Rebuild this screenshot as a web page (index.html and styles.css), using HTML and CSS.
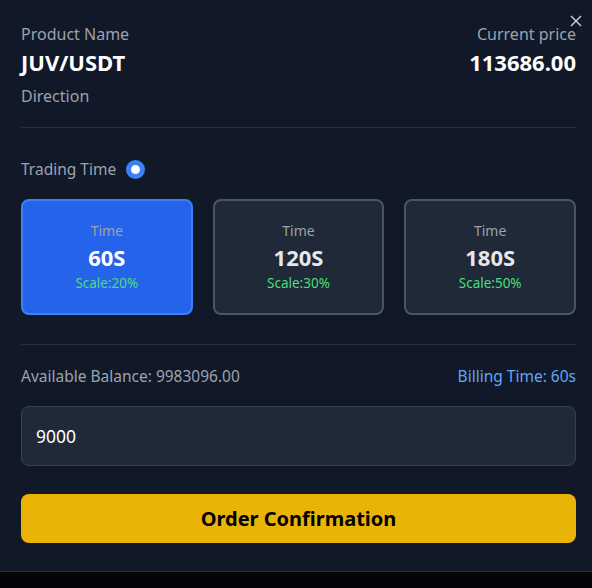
FILE: index.html
```html
<!DOCTYPE html>
<html>
<head>
<meta charset="utf-8">
<link rel="stylesheet" href="styles.css">
</head>
<body>
<div class="panel">
  <button class="close" aria-label="close">
    <svg width="12" height="12" viewBox="0 0 12 12"><path d="M1 1L11 11M11 1L1 11" stroke="#d1d5db" stroke-width="1.4" fill="none"/></svg>
  </button>
  <div class="head">
    <div class="col">
      <div class="label hl">Product Name</div>
      <div class="big">JUV/USDT</div>
      <div class="label hl dir">Direction</div>
    </div>
    <div class="col right">
      <div class="label hl">Current price</div>
      <div class="big">113686.00</div>
    </div>
  </div>
  <hr class="divider">
  <div class="tt">
    <span class="label">Trading Time</span>
    <span class="radio"></span>
  </div>
  <div class="cards">
    <div class="card active">
      <div class="ct">Time</div>
      <div class="cv">60S</div>
      <div class="cs">Scale:20%</div>
    </div>
    <div class="card">
      <div class="ct">Time</div>
      <div class="cv">120S</div>
      <div class="cs">Scale:30%</div>
    </div>
    <div class="card">
      <div class="ct">Time</div>
      <div class="cv">180S</div>
      <div class="cs">Scale:50%</div>
    </div>
  </div>
  <hr class="divider d2">
  <div class="bal">
    <span class="label">Available Balance: 9983096.00</span>
    <span class="billing">Billing Time: 60s</span>
  </div>
  <div class="input">9000</div>
  <button class="confirm">Order Confirmation</button>
</div>
<div class="footer"></div>
</body>
</html>
```
FILE: styles.css
```css
* { box-sizing: border-box; }
html, body { margin: 0; padding: 0; }
body {
  background: #030508;
  font-family: "Noto Sans", "Open Sans", sans-serif;
  width: 592px;
  height: 588px;
  overflow: hidden;
}
.panel {
  position: relative;
  background: #111827;
  height: 572px;
  padding: 21px 16px 0 21px;
  border-bottom: 1px solid #1c3339;
}
.close {
  position: absolute;
  top: 15px;
  right: 10px;
  background: none;
  border: 0;
  padding: 0;
  width: 12px;
  height: 12px;
  display: flex;
}
.head {
  display: flex;
  justify-content: space-between;
}
.col { display: flex; flex-direction: column; }
.col.right { align-items: flex-end; }
.label {
  color: #9ca3af;
  font-size: 15.5px;
  line-height: 26px;
}
.label.hl { font-size: 16px; }
.big {
  color: #ffffff;
  font-weight: 700;
  font-size: 22px;
  line-height: 30px;
}
.dir { margin-top: 6px; }
.divider {
  border: 0;
  height: 1px;
  background: #263041;
  margin: 18px 0 0;
}
.tt {
  display: flex;
  align-items: center;
  gap: 10px;
  margin-top: 28px;
}
.radio {
  width: 19px;
  height: 19px;
  border-radius: 50%;
  background: #fff;
  border: 5px solid #3b82f6;
}
.cards {
  display: grid;
  grid-template-columns: repeat(3, 1fr);
  gap: 20px;
  margin-top: 17px;
}
.card {
  height: 116px;
  border: 2px solid #4b5563;
  background: #1f2937;
  border-radius: 8px;
  display: flex;
  flex-direction: column;
  align-items: center;
  justify-content: center;
}
.card.active {
  background: #2563eb;
  border-color: #3b82f6;
}
.ct {
  color: #9ca3af;
  font-size: 14px;
  line-height: 20px;
}
.cv {
  color: #e5e7eb;
  font-size: 22px;
  font-weight: 700;
  line-height: 32px;
}
.card.active .cv { color: #fff; }
.cs {
  color: #4ade80;
  font-size: 13.5px;
  line-height: 20px;
}
.d2 { margin-top: 29px; }
.bal {
  display: flex;
  justify-content: space-between;
  align-items: center;
  margin-top: 18px;
}
.billing {
  color: #60a5fa;
  font-size: 15.5px;
  line-height: 26px;
}
.input {
  margin-top: 17px;
  height: 60px;
  background: #1f2937;
  border: 1px solid #374151;
  border-radius: 8px;
  color: #fff;
  font-size: 17.5px;
  display: flex;
  align-items: center;
  padding-left: 14px;
}
.confirm {
  display: block;
  width: 100%;
  margin-top: 28px;
  height: 49px;
  background: #eab308;
  border: 0;
  border-radius: 8px;
  color: #000;
  font-family: inherit;
  font-size: 20px;
  font-weight: 700;
}
```
